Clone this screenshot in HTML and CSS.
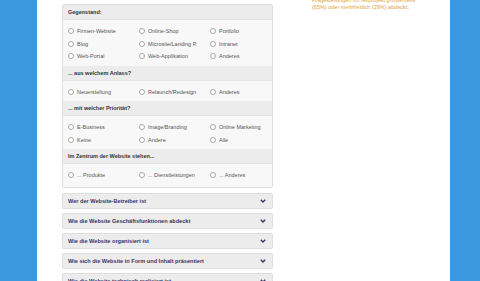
FILE: index.html
```html
<!DOCTYPE html>
<html lang="de">
<head>
    <meta charset="UTF-8">
    <meta name="viewport" content="width=device-width, initial-scale=1.0">
    <title>Website-Analyse</title>
    <link rel="stylesheet" href="styles.css">
</head>
<body>
    <div class="page">
        <div class="main-col">
            <div class="form-panel">
                <div class="group-title">Gegenstand:</div>
                <div class="options">
                    <label class="option"><span class="radio"></span>Firmen-Website</label>
                    <label class="option"><span class="radio"></span>Online-Shop</label>
                    <label class="option"><span class="radio"></span>Portfolio</label>
                    <label class="option"><span class="radio"></span>Blog</label>
                    <label class="option"><span class="radio"></span>Microsite/Landing P.</label>
                    <label class="option"><span class="radio"></span>Intranet</label>
                    <label class="option"><span class="radio"></span>Web-Portal</label>
                    <label class="option"><span class="radio"></span>Web-Applikation</label>
                    <label class="option"><span class="radio"></span>Anderes</label>
                </div>

                <div class="group-title">... aus welchem Anlass?</div>
                <div class="options">
                    <label class="option"><span class="radio"></span>Neuerstellung</label>
                    <label class="option"><span class="radio"></span>Relaunch/Redesign</label>
                    <label class="option"><span class="radio"></span>Anderes</label>
                </div>

                <div class="group-title">... mit welcher Priorität?</div>
                <div class="options">
                    <label class="option"><span class="radio"></span>E-Business</label>
                    <label class="option"><span class="radio"></span>Image/Branding</label>
                    <label class="option"><span class="radio"></span>Online Marketing</label>
                    <label class="option"><span class="radio"></span>Keine</label>
                    <label class="option"><span class="radio"></span>Andere</label>
                    <label class="option"><span class="radio"></span>Alle</label>
                </div>

                <div class="group-title">Im Zentrum der Website stehen...</div>
                <div class="options last">
                    <label class="option"><span class="radio"></span>... Produkte</label>
                    <label class="option"><span class="radio"></span>... Dienstleistungen</label>
                    <label class="option"><span class="radio"></span>... Anderes</label>
                </div>
            </div>

            <div class="accordion">
                <div class="acc-item">Wer der Website-Betreiber ist
                    <svg class="chevron" viewBox="0 0 6 4"><polyline points="0.8,0.8 3,3 5.2,0.8"/></svg>
                </div>
                <div class="acc-item">Wie die Website Geschäftsfunktionen abdeckt
                    <svg class="chevron" viewBox="0 0 6 4"><polyline points="0.8,0.8 3,3 5.2,0.8"/></svg>
                </div>
                <div class="acc-item">Wie die Website organisiert ist
                    <svg class="chevron" viewBox="0 0 6 4"><polyline points="0.8,0.8 3,3 5.2,0.8"/></svg>
                </div>
                <div class="acc-item">Wie sich die Website in Form und Inhalt präsentiert
                    <svg class="chevron" viewBox="0 0 6 4"><polyline points="0.8,0.8 3,3 5.2,0.8"/></svg>
                </div>
                <div class="acc-item">Wie die Website technisch realisiert ist
                    <svg class="chevron" viewBox="0 0 6 4"><polyline points="0.8,0.8 3,3 5.2,0.8"/></svg>
                </div>
            </div>
        </div>

        <div class="side-col">
            <p class="side-note">Fragestellungen im Teilprojekt größtenteils (65%) oder mehrheitlich (29%) abdeckt.</p>
        </div>
    </div>
</body>
</html>
```

FILE: styles.css
```css
body {
    margin: 0;
    background: #3c98de;
    font-family: 'Liberation Sans', Arial, sans-serif;
    height: 281px;
    overflow: hidden;
}
.page {
    margin-left: 37px;
    width: 413px;
    height: 281px;
    background: #fff;
    display: flex;
    gap: 39px;
    padding-left: 25px;
    box-sizing: border-box;
}
.main-col {
    width: 211px;
    flex-shrink: 0;
    padding-top: 4px;
}

/* Formular */
.form-panel {
    border: 1px solid #dedede;
    border-radius: 2px;
    background: #f8f8f8;
}
.group-title {
    height: 15px;
    line-height: 15px;
    padding-left: 5px;
    background: #ececec;
    border-bottom: 1px solid #e4e4e4;
    box-sizing: border-box;
    font-size: 5.5px;
    font-weight: bold;
    color: #333;
}
.options {
    display: grid;
    grid-template-columns: 71px 71px 1fr;
    grid-auto-rows: 12.5px;
    padding: 5px 5px 3px;
}
.options.last {
    padding-bottom: 5px;
}
.option {
    display: flex;
    align-items: center;
    font-size: 5.5px;
    color: #555;
    white-space: nowrap;
}
.radio {
    width: 6px;
    height: 6px;
    border: 1px solid #a8a8a8;
    border-radius: 50%;
    background: #fff;
    box-sizing: border-box;
    margin-right: 3px;
    flex-shrink: 0;
}

/* Akkordeon */
.accordion {
    margin-top: 5px;
    display: flex;
    flex-direction: column;
    gap: 4px;
}
.acc-item {
    height: 16px;
    padding: 0 6px 0 5px;
    display: flex;
    align-items: center;
    justify-content: space-between;
    background: #ececec;
    border: 1px solid #dedede;
    border-radius: 2px;
    box-sizing: border-box;
    font-size: 5.6px;
    font-weight: bold;
    color: #3a3566;
}
.chevron {
    width: 6px;
    height: 4px;
    fill: none;
    stroke: #3a3566;
    stroke-width: 1.4;
}

/* rechte Spalte */
.side-col {
    width: 110px;
}
.side-note {
    margin: -3px 0 0;
    font-size: 5.5px;
    line-height: 6.5px;
    color: #e2a43a;
}
```
